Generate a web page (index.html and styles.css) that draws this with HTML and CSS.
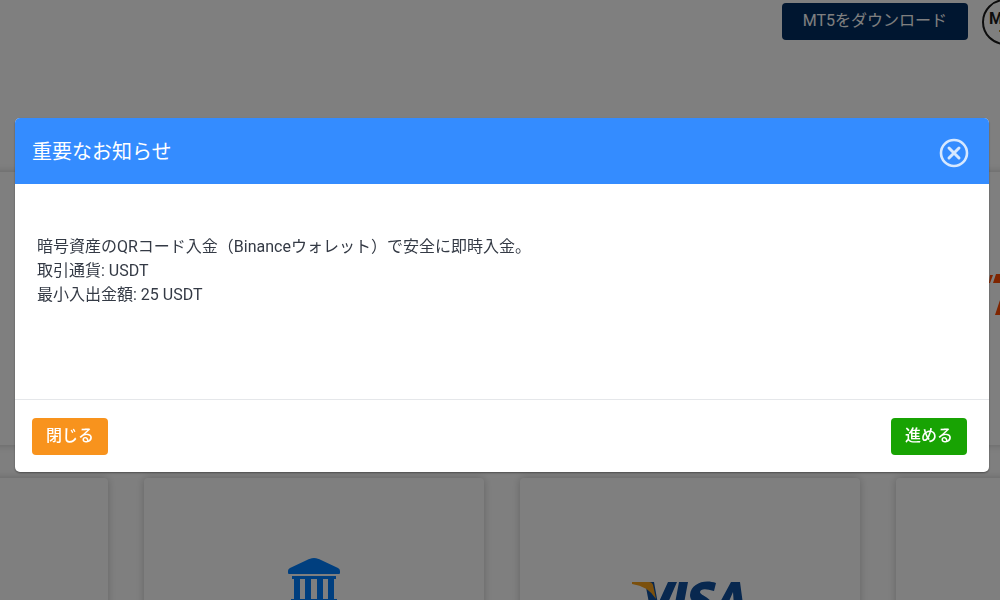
FILE: index.html
```
<!DOCTYPE html>
<html lang="ja">
<head>
    <meta charset="UTF-8">
    <meta name="viewport" content="width=device-width, initial-scale=1.0">
    <title>重要なお知らせ</title>
    <link rel="stylesheet" href="styles.css">
</head>
<body>
    <header class="topbar">
        <button type="button" class="btn download-btn">MT5をダウンロード</button>
        <div class="avatar">
            <svg width="46" height="46" viewBox="0 0 46 46">
                <circle cx="23" cy="23" r="22" fill="#fff" stroke="#1a1a1a" stroke-width="2"/>
                <text x="7" y="25" class="avatar-text">MT5</text>
                <path d="M17 32h12" stroke="#c89020" stroke-width="2"/>
            </svg>
        </div>
    </header>

    <main class="methods">
        <div class="card"></div>
        <div class="card"></div>
        <div class="card"></div>
        <div class="card">
            <svg class="pay-logo" width="154" height="44" viewBox="0 0 154 44" fill="#ff4a00">
                <path d="M1 2h3l-3 8H0z"/>
                <path d="M7 1h26l-3 9H4z"/>
                <path d="M12 24h9l-6 18H6z"/>
                <path d="M44 1h30l-3 9H50l-8 32h-9z"/>
            </svg>
        </div>
        <div class="card"></div>
        <div class="card">
            <svg class="bank-icon" width="54" height="54" viewBox="0 0 54 54" fill="#007fff">
                <path d="M27 1c3 0 5 1 7 2l17 8q2 1 2 3v2q0 1-1 1H2q-1 0-1-1v-2q0-2 2-3l17-8c2-1 4-2 7-2z"/>
                <path d="M5 19h44v3h-2v20h3v4H4v-4h3V22H5z M13 22v20h5V22z M24 22v20h6V22z M36 22v20h5V22z" fill-rule="evenodd"/>
                <path d="M1 48h52v5H1z"/>
            </svg>
        </div>
        <div class="card">
            <svg class="visa-logo" width="116" height="40" viewBox="0 0 116 40">
                <path d="M13 1h9l4 22L36 1h9L29 38H20z" fill="#10509f"/>
                <path d="M0 1h17q3 0 4 3l3 14Q16 5 0 3z" fill="#f6a01a"/>
                <path d="M47 1h9l-7 37h-9z" fill="#10509f"/>
                <path d="M84 2l-2 8q-13-4-14 1c0 4 13 5 12 15-1 12-16 15-27 10l2-8q14 5 15 0c0-4-12-5-12-14C59 2 73-2 84 2z" fill="#10509f"/>
                <path d="M99 1h9l5 37h-9l-1-5H92l-3 5H79z M95 25h7l-1-14z" fill="#10509f" fill-rule="evenodd"/>
            </svg>
        </div>
        <div class="card"></div>
    </main>

    <div class="backdrop">
        <section class="modal" role="dialog" aria-labelledby="modalTitle">
            <div class="modal-header">
                <h1 id="modalTitle">重要なお知らせ</h1>
                <button type="button" class="close-btn" aria-label="閉じる">
                    <svg width="30" height="30" viewBox="0 0 30 30" fill="none" stroke="#d6e8ff">
                        <circle cx="15" cy="15" r="13" stroke-width="2.6"/>
                        <path d="M10 10l10 10M20 10L10 20" stroke-width="3" stroke-linecap="round"/>
                    </svg>
                </button>
            </div>
            <div class="modal-body">
                <p>暗号資産のQRコード入金（Binanceウォレット）で安全に即時入金。<br>
                取引通貨: USDT<br>
                最小入出金額: 25 USDT</p>
            </div>
            <div class="modal-footer">
                <button type="button" class="btn cancel-btn">閉じる</button>
                <button type="button" class="btn proceed-btn">進める</button>
            </div>
        </section>
    </div>
</body>
</html>
```
FILE: styles.css
```
* {
    box-sizing: border-box;
}
body {
    margin: 0;
    height: 100vh;
    overflow: hidden;
    background-color: #fff;
    color: #343a45;
    font-family: Roboto, "Noto Sans CJK JP", sans-serif;
    font-size: 16px;
    line-height: 24px;
}
.btn {
    padding: 6px 14px 7px;
    border: none;
    border-radius: 4px;
    color: #fff;
    font: inherit;
    font-weight: 500;
    cursor: pointer;
}
.topbar {
    display: flex;
    justify-content: flex-end;
    gap: 14px;
    height: 172px;
    padding-top: 3px;
    margin-right: -28px;
}
.download-btn {
    height: 37px;
    padding: 6px 21px 7px;
    background-color: #002c60;
    font-weight: 400;
}
.avatar {
    margin-top: -4px;
}
.avatar-text {
    font-size: 16px;
    font-weight: 700;
    fill: #1a1a1a;
}
.methods {
    display: grid;
    grid-template-columns: repeat(4, 340px);
    grid-auto-rows: 273px;
    gap: 33px 36px;
    margin-left: -232px;
}
.card {
    display: flex;
    justify-content: center;
    align-items: center;
    border-radius: 4px;
    box-shadow: 0 0 8px rgba(0, 0, 0, 0.22);
}
.pay-logo {
    margin-bottom: 28px;
}
.bank-icon, .visa-logo {
    align-self: flex-start;
    margin-top: 79px;
}
.visa-logo {
    margin-top: 103px;
}

/* Modal */
.backdrop {
    position: fixed;
    inset: 0;
    padding: 118px 11px 0 15px;
    background-color: rgba(0, 0, 0, 0.5);
}
.modal {
    overflow: hidden;
    border-radius: 5px;
    background-color: #fff;
    box-shadow: 0 1px 2px rgba(0, 0, 0, 0.4);
}
.modal-header {
    display: flex;
    justify-content: space-between;
    align-items: center;
    padding: 20px 20px 16px 17px;
    background-color: #348cff;
    color: #fff;
}
.modal-header h1 {
    margin: 0 0 2px;
    font-size: 20px;
    font-weight: 400;
    line-height: 28px;
}
.close-btn {
    display: flex;
    padding: 0;
    border: none;
    background: none;
    cursor: pointer;
}
.modal-body {
    min-height: 215px;
    padding: 51px 22px;
}
.modal-body p {
    margin: 0;
}
.modal-footer {
    display: flex;
    justify-content: space-between;
    padding: 18px 22px 17px 17px;
    border-top: 1px solid #e5e7ea;
}
.cancel-btn {
    background-color: #f8931d;
}
.proceed-btn {
    background-color: #18a303;
}
```
